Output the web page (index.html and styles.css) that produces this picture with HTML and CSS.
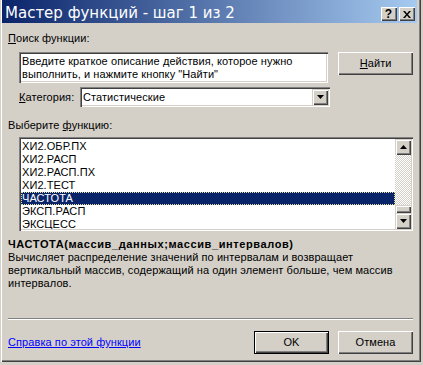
FILE: index.html
```html
<!DOCTYPE html>
<html lang="ru">
<head>
<meta charset="utf-8">
<title>Мастер функций - шаг 1 из 2</title>
<link rel="stylesheet" href="styles.css">
</head>
<body>
<div class="window">
  <div class="titlebar">
    <span class="title">Мастер функций - шаг 1 из 2</span>
    <div class="caption-buttons">
      <div class="cap-btn help">?</div>
      <div class="cap-btn close">
        <svg width="8" height="7" viewBox="0 0 8 7"><path d="M0 0h2l2 2.5L6 0h2L5 3.5 8 7H6L4 4.5 2 7H0l3-3.5z" fill="#000"/></svg>
      </div>
    </div>
  </div>
  <div class="content">
    <div class="label"><u>П</u>оиск функции:</div>
    <div class="search-row">
      <div class="textbox">Введите краткое описание действия, которое нужно<br>выполнить, и нажмите кнопку "Найти"</div>
      <div class="button find"><u>Н</u>айти</div>
    </div>
    <div class="category-row">
      <span class="cat-label"><u>К</u>атегория:</span>
      <div class="combo">
        <span class="combo-text">Статистические</span>
        <div class="combo-btn"><svg width="7" height="4" viewBox="0 0 7 4"><path d="M0 0h7L3.5 4z" fill="#000"/></svg></div>
      </div>
    </div>
    <div class="label choose">Выберите <u>ф</u>ункцию:</div>
    <div class="listbox">
      <ul class="items">
        <li>ХИ2.ОБР.ПХ</li>
        <li>ХИ2.РАСП</li>
        <li>ХИ2.РАСП.ПХ</li>
        <li>ХИ2.ТЕСТ</li>
        <li class="selected">ЧАСТОТА</li>
        <li>ЭКСП.РАСП</li>
        <li>ЭКСЦЕСС</li>
      </ul>
      <div class="scrollbar">
        <div class="sb-btn"><svg width="7" height="4" viewBox="0 0 7 4"><path d="M3.5 0L7 4H0z" fill="#000"/></svg></div>
        <div class="sb-track"></div>
        <div class="sb-thumb"></div>
        <div class="sb-btn"><svg width="7" height="4" viewBox="0 0 7 4"><path d="M0 0h7L3.5 4z" fill="#000"/></svg></div>
      </div>
    </div>
    <div class="signature">ЧАСТОТА(массив_данных;массив_интервалов)</div>
    <div class="description">Вычисляет распределение значений по интервалам и возвращает<br>вертикальный массив, содержащий на один элемент больше, чем массив<br>интервалов.</div>
    <div class="separator"></div>
    <div class="footer">
      <a class="help-link" href="#">Справка по этой функции</a>
      <div class="footer-buttons">
        <div class="button default">OK</div>
        <div class="button">Отмена</div>
      </div>
    </div>
  </div>
</div>
</body>
</html>
```
FILE: styles.css
```css
* { box-sizing: border-box; }

html, body {
  margin: 0;
  background: #d4d0c8;
}

body {
  font-family: "Liberation Sans", Arial, sans-serif;
  font-size: 11px;
  line-height: 13px;
  letter-spacing: 0.08px;
  color: #000;
}

.window {
  width: 421px;
  height: 362px;
  padding: 0 2px 2px 2px;
  background: #d4d0c8;
  display: flex;
  flex-direction: column;
  box-shadow: inset 1px 0 0 #d4d0c8, inset 2px 0 0 #ffffff,
              inset -1px -1px 0 #404040, inset -2px -2px 0 #808080;
}

.titlebar {
  height: 23px;
  margin-right: 2px;
  background: linear-gradient(to right, #0a246a, #a6caf0);
  display: flex;
  align-items: flex-start;
  justify-content: space-between;
  padding-left: 3px;
}

.title {
  font-family: "DejaVu Sans", Verdana, sans-serif;
  font-size: 15px;
  line-height: 20px;
  letter-spacing: 0;
  padding-top: 3px;
  color: #fff;
  white-space: nowrap;
}

.caption-buttons {
  display: flex;
  gap: 2px;
  margin-top: 7px;
  margin-right: 2px;
}

.cap-btn {
  width: 16px;
  height: 14px;
  background: #d4d0c8;
  box-shadow: inset 1px 1px 0 #ffffff, inset -1px -1px 0 #404040, inset -2px -2px 0 #808080;
  display: flex;
  align-items: center;
  justify-content: center;
}

.cap-btn.help {
  font-weight: bold;
  font-size: 12px;
  line-height: 12px;
  padding-right: 1px;
}

.cap-btn.close svg { margin-right: 1px; }

.content {
  flex: 1;
  display: flex;
  flex-direction: column;
  padding: 9px 6px 6px 6px;
}

.label {
  white-space: nowrap;
}

.search-row {
  display: flex;
  align-items: flex-start;
  margin-top: 7px;
  margin-left: 11px;
}

.textbox, .combo, .listbox {
  background: #fff;
  box-shadow: inset 1px 1px 0 #808080, inset 2px 2px 0 #404040,
              inset -1px -1px 0 #ffffff, inset -2px -2px 0 #d4d0c8;
}

.textbox {
  width: 311px;
  height: 31px;
  padding: 3px 2px 0 3px;
  white-space: nowrap;
}

.button {
  width: 75px;
  height: 23px;
  background: #d4d0c8;
  box-shadow: inset 1px 1px 0 #ffffff, inset -1px -1px 0 #404040, inset -2px -2px 0 #808080;
  display: flex;
  align-items: center;
  justify-content: center;
}

.button.find {
  margin-left: 10px;
}

.button.default {
  border: 1px solid #000;
}

.category-row {
  display: flex;
  align-items: center;
  margin-top: 4px;
  margin-left: 11px;
}

.cat-label {
  width: 61px;
}

.combo {
  width: 250px;
  height: 20px;
  display: flex;
  align-items: center;
  justify-content: space-between;
  padding: 2px;
}

.combo-text {
  padding-left: 1px;
}

.combo-btn {
  width: 16px;
  height: 16px;
  background: #d4d0c8;
  box-shadow: inset 1px 1px 0 #d4d0c8, inset 2px 2px 0 #ffffff,
              inset -1px -1px 0 #404040, inset -2px -2px 0 #808080;
  display: flex;
  align-items: center;
  justify-content: center;
}

.label.choose {
  margin-top: 12px;
}

.listbox {
  margin-top: 5px;
  margin-left: 11px;
  height: 94px;
  display: flex;
  padding: 2px;
}

.items {
  list-style: none;
  margin: 0;
  padding: 1px 0 0 0;
  flex: 1;
  overflow: hidden;
}

.items li {
  height: 13px;
  padding-left: 1px;
  white-space: nowrap;
}

.items li.selected {
  background: #0a246a;
  color: #fff;
  outline: 1px dotted #e8e0a0;
  outline-offset: -1px;
}

.scrollbar {
  width: 16px;
  display: flex;
  flex-direction: column;
}

.sb-btn, .sb-thumb {
  background: #d4d0c8;
  box-shadow: inset 1px 1px 0 #d4d0c8, inset 2px 2px 0 #ffffff,
              inset -1px -1px 0 #404040, inset -2px -2px 0 #808080;
}

.sb-btn {
  height: 16px;
  display: flex;
  align-items: center;
  justify-content: center;
}

.sb-track {
  flex: 1;
  background: repeating-conic-gradient(#d4d0c8 0 25%, #ffffff 0 50%) 0 0 / 2px 2px;
}

.sb-thumb {
  height: 8px;
}

.signature {
  margin-top: 7px;
  font-weight: bold;
  letter-spacing: 0.6px;
  white-space: nowrap;
}

.description {
  white-space: nowrap;
}

.separator {
  margin-top: auto;
  height: 2px;
  border-top: 1px solid #808080;
  border-bottom: 1px solid #ffffff;
}

.footer {
  margin-top: 11px;
  display: flex;
  align-items: center;
  justify-content: space-between;
}

.help-link {
  color: #0000ff;
  text-decoration: underline;
}

.footer-buttons {
  display: flex;
  gap: 9px;
}
```
